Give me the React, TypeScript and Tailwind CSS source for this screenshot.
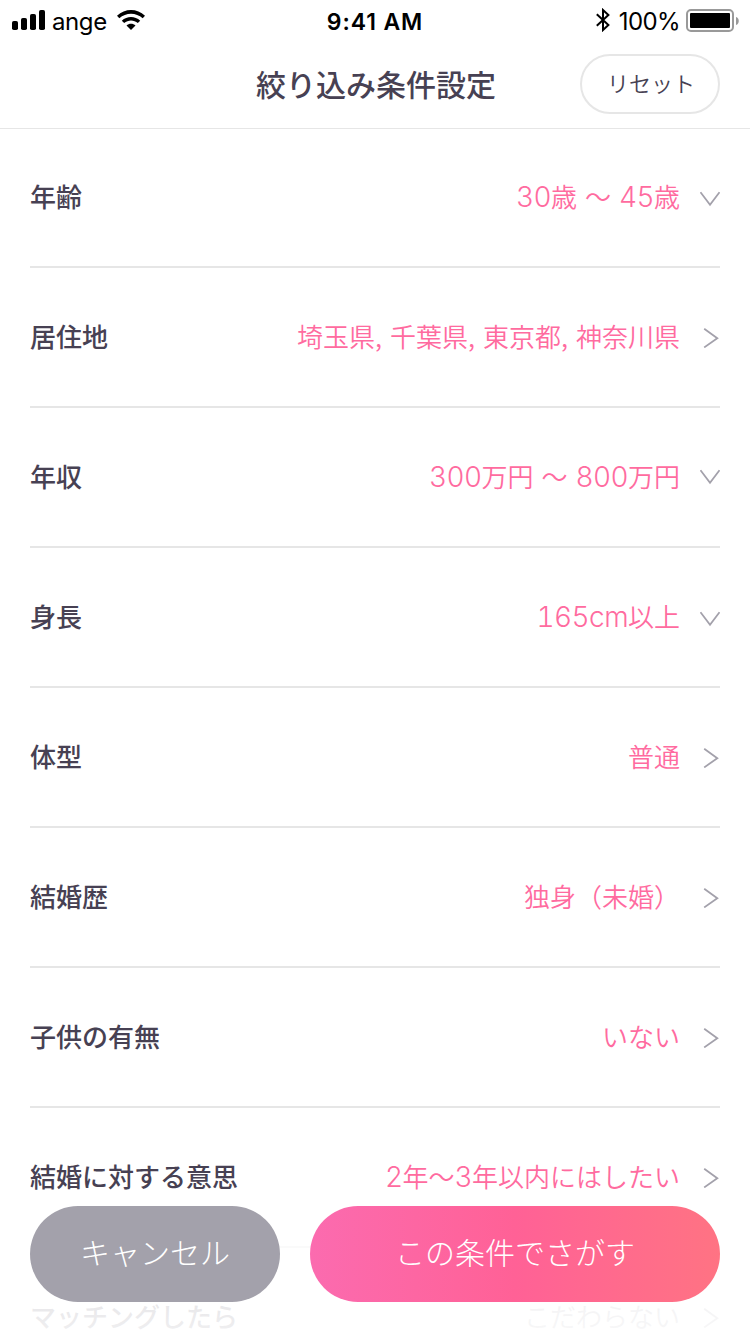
import React from "react";

type Direction = "down" | "right";

interface Filter {
  label: string;
  value: string;
  direction: Direction;
  raised?: boolean;
  unset?: boolean;
}

const filters: Filter[] = [
  { label: "年齢", value: "30歳 〜 45歳", direction: "down" },
  { label: "居住地", value: "埼玉県, 千葉県, 東京都, 神奈川県", direction: "right" },
  { label: "年収", value: "300万円 〜 800万円", direction: "down", raised: true },
  { label: "身長", value: "165cm以上", direction: "down" },
  { label: "体型", value: "普通", direction: "right" },
  { label: "結婚歴", value: "独身（未婚）", direction: "right" },
  { label: "子供の有無", value: "いない", direction: "right" },
  { label: "結婚に対する意思", value: "2年〜3年以内にはしたい", direction: "right" },
  { label: "マッチングしたら", value: "こだわらない", direction: "right", unset: true },
];

function Chevron({ direction, raised }: { direction: Direction; raised?: boolean }) {
  return (
    <svg
      viewBox="0 0 20 20"
      className={`ml-5 h-5 w-5 shrink-0 fill-none stroke-[#a3a1ab] ${raised ? "mb-0.5" : "mt-0.5"}`}
      strokeWidth="1.8"
    >
      {direction === "down" ? <path d="M.5 4.2 10 16.8 19.5 4.2" /> : <path d="M4.2.8 17.3 10.2 4.2 19.4" />}
    </svg>
  );
}

function Value({ text, unset }: { text: string; unset?: boolean }) {
  const parts = text.split(/([0-9a-z]+)/);
  return (
    <span
      className={`flex-1 pb-[3px] text-right text-[26px] leading-[40px] font-[350] [word-spacing:2.2px] whitespace-pre ${unset ? "text-[#a3a1ab]" : "text-[#ff6b9f]"}`}
    >
      {parts.map((part, i) =>
        /^[0-9a-z]+$/.test(part) ? (
          <span key={i} className="font-['Inter'] text-[28px] leading-[26px] font-[350] tracking-[-0.6px] tabular-nums">
            {part}
          </span>
        ) : (
          part
        ),
      )}
    </span>
  );
}

function StatusBar() {
  return (
    <div className="grid h-10 grid-cols-3 items-center font-['Inter'] text-[24px] leading-10 text-black">
      <div className="flex items-center pl-3">
        <svg viewBox="0 0 33 20" className="h-5 w-[33px]">
          <rect y="11" width="6" height="9" rx="1.8" />
          <rect x="9" y="8" width="6" height="12" rx="1.8" />
          <rect x="18" y="4" width="6" height="16" rx="1.8" />
          <rect x="27" width="6" height="20" rx="1.8" />
        </svg>
        <span className="ml-[7px] pt-[3px] leading-[37px] tracking-[-0.4px]">ange</span>
        <svg viewBox="0 0 28 20" className="ml-[10px] h-5 w-7">
          <path d="M0 5.8C8-1.8 20-1.8 28 5.8L25.7 8.3C19 2.2 9 2.2 2.3 8.3Z" />
          <path d="M4.8 10.7C10 5.8 18 5.8 23.2 10.7L20.8 13.1C17 9.7 11 9.7 7.2 13.1Z" />
          <path d="M9.5 15.5C12 13.2 16 13.2 18.5 15.5L14 20Z" />
        </svg>
      </div>
      <span className="pt-1 text-center text-[23px] leading-9 font-semibold tracking-[0.9px]">9:41 AM</span>
      <div className="flex items-center justify-end pr-[11px]">
        <svg viewBox="0 0 14 24" className="mr-[9px] h-6 w-[14px] fill-none stroke-black" strokeWidth="2">
          <path d="M.8 6.2 12.4 17 7 22V2L12.4 6.9.8 17.8" />
        </svg>
        <span className="mr-[6px] pt-[3px] leading-[37px] tracking-[-0.6px]">100%</span>
        <svg viewBox="0 0 53 24" className="mt-0.5 h-6 w-[53px]">
          <rect x="1" y="1" width="46" height="21" rx="4" className="fill-none stroke-[#999]" strokeWidth="2" />
          <rect x="4" y="4" width="40" height="15" rx="1" />
          <path d="M50 8C53.7 9 53.7 15 50 16Z" className="fill-[#999]" />
        </svg>
      </div>
    </div>
  );
}

export default function App() {
  return (
    <main className="relative h-[1334px] w-[750px] overflow-hidden bg-white font-['Noto_Sans_CJK_JP',sans-serif] text-[#474153]">
      <header className="h-[128px] bg-white shadow-[0_1px_0_#e6e6e6]">
        <StatusBar />
        <div className="grid h-[88px] grid-cols-[1fr_240px_1fr] items-center px-[30px]">
          <h1 className="col-start-2 pb-[2px] pl-px text-center text-[30px] leading-[44px] font-medium whitespace-nowrap">
            絞り込み条件設定
          </h1>
          <button className="h-[60px] w-[140px] justify-self-end rounded-full border-2 border-[#e6e6e6] pb-1 pl-[2px] text-[22px] font-[350]">
            リセット
          </button>
        </div>
      </header>
      <ul className="px-[30px]">
        {filters.map((filter) => (
          <li key={filter.label} className="flex h-[140px] items-center border-b-2 border-[#e6e6e6]">
            <span className="pb-[3px] text-[26px] leading-[40px] font-medium whitespace-nowrap">{filter.label}</span>
            <Value text={filter.value} unset={filter.unset} />
            <Chevron direction={filter.direction} raised={filter.raised} />
          </li>
        ))}
      </ul>
      <footer className="absolute inset-x-0 bottom-0 flex h-[138px] gap-[30px] bg-linear-to-b from-white/0 via-white/80 via-36% to-white/92 px-[30px] pt-[10px]">
        <button className="h-24 w-[250px] rounded-full bg-[#a3a1ab] pb-[5px] text-[30px] font-light text-white">
          キャンセル
        </button>
        <button className="h-24 w-[410px] rounded-full bg-linear-to-r from-[#fb6baf] via-[#ff6196] to-[#ff7383] pb-[5px] text-[30px] font-light text-white">
          この条件でさがす
        </button>
      </footer>
    </main>
  );
}
